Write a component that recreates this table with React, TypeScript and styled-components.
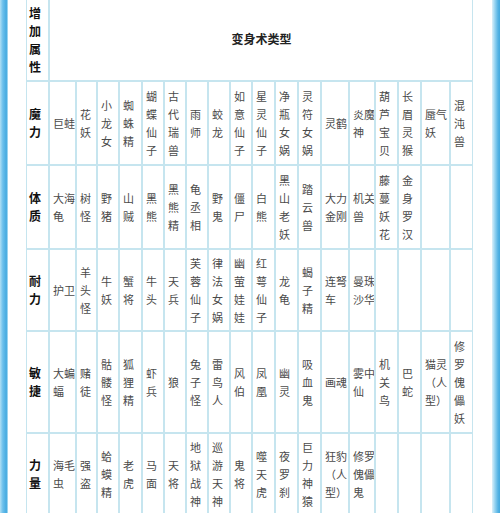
import React from "react";
import styled, { createGlobalStyle } from "styled-components";

const GlobalStyle = createGlobalStyle`
  html, body {
    margin: 0;
    padding: 0;
    background: #ffffff;
  }
  body {
    font-family: "Noto Sans CJK SC", "Noto Sans", sans-serif;
  }
`;

const Page = styled.div`
  display: flex;
  flex-direction: row;
  width: 500px;
  height: 513px;
  overflow: hidden;
  background: #ffffff;
`;

const EdgeBar = styled.div<{ $side: "left" | "right" }>`
  flex: 0 0 8px;
  height: 100%;
  background: ${(p) =>
    p.$side === "left"
      ? "linear-gradient(to right, #b0dff4 0%, #6cc0ec 35%, #45aae0 80%, #c0e6f6 100%)"
      : "linear-gradient(to right, #dcf1fa 0%, #98d4f1 35%, #55b3e4 75%, #42a8de 100%)"};
`;

const TableArea = styled.div`
  flex: 1 1 auto;
  padding-left: 18px;
  padding-right: 19px;
  margin-top: -1px;
`;

const Grid = styled.table`
  border-collapse: separate;
  border-spacing: 0;
  table-layout: fixed;
  width: 447px;
  background: #ffffff;
`;

const Row = styled.tr<{ $h: number }>`
  height: ${(p) => p.$h}px;
`;

const CellBase = styled.td`
  box-sizing: border-box;
  border: 1px solid #c6e5ef;
  padding: 4px 2px 4px 3px;
  vertical-align: middle;
  text-align: left;
  white-space: nowrap;
  overflow: hidden;
  line-height: 18px;
`;

const LabelCell = styled(CellBase)`
  font-size: 12px;
  font-weight: 700;
  color: #111111;
  padding-left: 2px;
`;

const HeaderCell = styled(CellBase)`
  font-size: 12px;
  font-weight: 700;
  color: #222222;
  text-align: center;
  padding-bottom: 6px;
`;

const DataCell = styled(CellBase)`
  font-size: 11px;
  font-weight: 400;
  color: #4a4a4a;
`;

const colWidths = [23, 27, 21, 22, 23, 22, 22, 22, 22, 22, 23, 23, 23, 28, 26, 23, 23, 29, 23];

type RowData = { label: string; h: number; cells: string[] };

const rows: RowData[] = [
  {
    label: "魔/力",
    h: 84,
    cells: [
      "巨蛙", "花/妖", "小/龙/女", "蜘/蛛/精", "蝴/蝶/仙/子", "古/代/瑞/兽", "雨/师", "蛟/龙",
      "如/意/仙/子", "星/灵/仙/子", "净/瓶/女/娲", "灵/符/女/娲", "灵鹤", "炎魔/神",
      "葫/芦/宝/贝", "长/眉/灵/猴", "蜃气/妖", "混/沌/兽",
    ],
  },
  {
    label: "体/质",
    h: 84,
    cells: [
      "大海/龟", "树/怪", "野/猪", "山/贼", "黑/熊", "黑/熊/精", "龟/丞/相", "野/鬼", "僵/尸",
      "白/熊", "黑/山/老/妖", "踏/云/兽", "大力/金刚", "机关/兽", "藤/蔓/妖/花", "金/身/罗/汉",
      "", "",
    ],
  },
  {
    label: "耐/力",
    h: 82,
    cells: [
      "护卫", "羊/头/怪", "牛/妖", "蟹/将", "牛/头", "天/兵", "芙/蓉/仙/子", "律/法/女/娲",
      "幽/萤/娃/娃", "红/萼/仙/子", "龙/龟", "蝎/子/精", "连弩/车", "曼珠/沙华", "", "", "", "",
    ],
  },
  {
    label: "敏/捷",
    h: 102,
    cells: [
      "大蝙/蝠", "赌/徒", "骷/髅/怪", "狐/狸/精", "虾/兵", "狼", "兔/子/怪", "雷/鸟/人", "风/伯",
      "凤/凰", "幽/灵", "吸/血/鬼", "画魂", "雾中/仙", "机/关/鸟", "巴/蛇", "猫灵/（人/型）",
      "修/罗/傀/儡/妖",
    ],
  },
  {
    label: "力/量",
    h: 81,
    cells: [
      "海毛/虫", "强/盗", "蛤/蟆/精", "老/虎", "马/面", "天/将", "地/狱/战/神", "巡/游/天/神",
      "鬼/将", "噬/天/虎", "夜/罗/刹", "巨/力/神/猿", "狂豹/（人/型）", "修罗/傀儡/鬼",
      "", "", "", "",
    ],
  },
];

const Lines: React.FC<{ text: string }> = ({ text }) => {
  if (!text) return null;
  const parts = text.split("/");
  return (
    <>
      {parts.map((p, i) => (
        <React.Fragment key={i}>
          {i > 0 && <br />}
          {p}
        </React.Fragment>
      ))}
    </>
  );
};

export default function App() {
  return (
    <>
      <GlobalStyle />
      <Page>
        <EdgeBar $side="left" />
        <TableArea>
          <Grid>
            <colgroup>
              {colWidths.map((w, i) => (
                <col key={i} style={{ width: `${w}px` }} />
              ))}
            </colgroup>
            <tbody>
              <Row $h={80}>
                <LabelCell>
                  <Lines text="增/加/属/性" />
                </LabelCell>
                <HeaderCell colSpan={18}>变身术类型</HeaderCell>
              </Row>
              {rows.map((r) => (
                <Row key={r.label} $h={r.h}>
                  <LabelCell>
                    <Lines text={r.label} />
                  </LabelCell>
                  {r.cells.map((c, i) => (
                    <DataCell key={i}>
                      <Lines text={c} />
                    </DataCell>
                  ))}
                </Row>
              ))}
            </tbody>
          </Grid>
        </TableArea>
        <EdgeBar $side="right" />
      </Page>
    </>
  );
}
